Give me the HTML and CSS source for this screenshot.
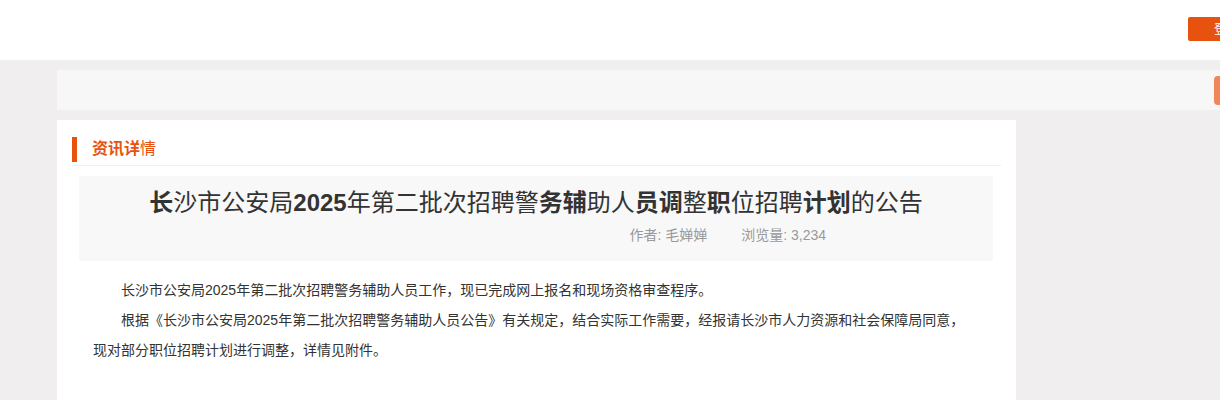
FILE: index.html
```html
<!DOCTYPE html>
<html lang="zh-CN">
<head>
<meta charset="utf-8">
<title>资讯详情</title>
<link rel="stylesheet" href="styles.css">
</head>
<body>
<header class="top">
  <div class="top-inner">
    <a class="login" href="#">登录</a>
  </div>
</header>
<div class="page">
  <div class="crumb">
    <span class="crumb-btn"></span>
  </div>
  <div class="card">
    <div class="sec-title"><span class="bar"></span><span class="sec-text"><b>资讯详</b>情</span></div>
    <div class="head-box">
      <h1 class="art-title"><b>长</b>沙市公安局<b>2025</b>年第二批次招聘警<b>务辅</b>助人<b>员调</b>整<b>职</b>位招聘<b>计划</b>的公告</h1>
      <div class="meta"><span class="author">作者: 毛婵婵</span><span class="views">浏览量: 3,234</span></div>
    </div>
    <div class="content">
      <p>长沙市公安局2025年第二批次招聘警务辅助人员工作，现已完成网上报名和现场资格审查程序。</p>
      <p>根据《长沙市公安局2025年第二批次招聘警务辅助人员公告》有关规定，结合实际工作需要，经报请长沙市人力资源和社会保障局同意，现对部分职位招聘计划进行调整，详情见附件。</p>
    </div>
  </div>
</div>
</body>
</html>
```
FILE: styles.css
```css
html, body {
  margin: 0;
  padding: 0;
}
body {
  background: #f0eeee;
  font-family: "Liberation Sans", "Noto Sans CJK SC", sans-serif;
  color: #333;
  overflow: hidden;
  width: 1220px;
  height: 400px;
}
.top {
  background: #fff;
  height: 60px;
}
.top-inner {
  width: 1200px;
  margin-left: 57px;
  height: 60px;
  display: flex;
  justify-content: flex-end;
  align-items: flex-start;
}
.login {
  margin-top: 17px;
  width: 69px;
  height: 24px;
  line-height: 24px;
  background: #e8520f;
  color: #fff;
  font-size: 13px;
  border-radius: 2px;
  text-decoration: none;
  padding-left: 26px;
  box-sizing: border-box;
}
.page {
  width: 1200px;
  margin-left: 57px;
  padding-top: 10px;
}
.crumb {
  height: 40px;
  background: #f7f7f7;
  display: flex;
  justify-content: flex-end;
  align-items: center;
  padding-right: 3px;
}
.crumb-btn {
  width: 40px;
  height: 29px;
  background: #f0875a;
  border-radius: 4px;
}
.card {
  margin-top: 10px;
  width: 959px;
  background: #fff;
  padding: 17px 15px 40px 15px;
  box-sizing: border-box;
  height: 300px;
}
.sec-title {
  display: flex;
  align-items: center;
  height: 25px;
  padding-bottom: 3px;
  border-bottom: 1px solid #f0f0f0;
}
.bar {
  width: 5px;
  height: 25px;
  background: #e8520f;
}
.sec-text {
  margin-left: 15px;
  font-size: 16px;
  color: #e8520f;
  line-height: 22px;
  margin-top: -2px;
}
.sec-text b {
  font-weight: bold;
}
.head-box {
  margin: 10px 8px 0 7px;
  background: #f8f8f8;
  height: 85px;
  padding-top: 11px;
  box-sizing: border-box;
}
.art-title {
  margin: 0;
  text-align: center;
  font-size: 24px;
  font-weight: normal;
  line-height: 32px;
  color: #333;
}
.meta {
  display: flex;
  justify-content: flex-end;
  padding-right: 167px;
  margin-top: 7px;
  font-size: 14px;
  line-height: 18px;
  color: #999;
}
.author {
  margin-right: 34px;
}
.content {
  padding: 14px 28px 0 21px;
}
.content p {
  margin: 0;
  font-size: 14px;
  line-height: 30px;
  text-indent: 2em;
  color: #333;
}
```
